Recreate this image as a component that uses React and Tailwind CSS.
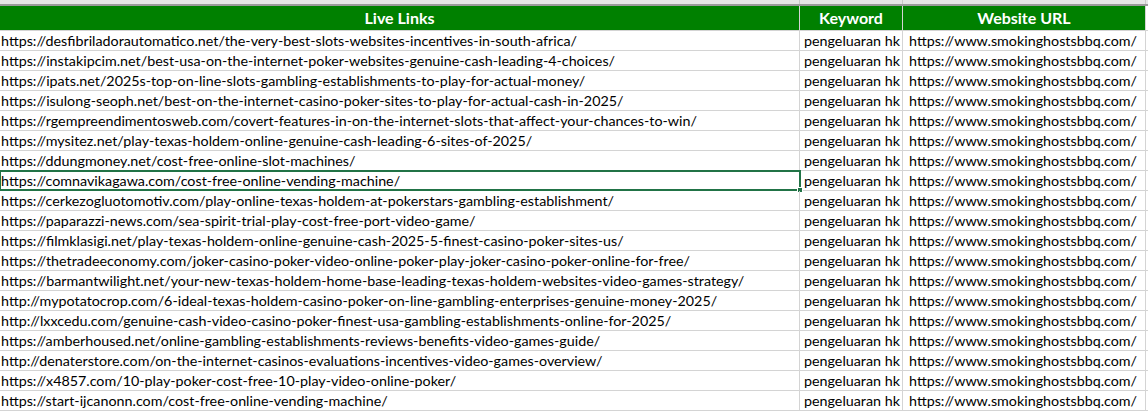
const links = [
  "https://desfibriladorautomatico.net/the-very-best-slots-websites-incentives-in-south-africa/",
  "https://instakipcim.net/best-usa-on-the-internet-poker-websites-genuine-cash-leading-4-choices/",
  "https://ipats.net/2025s-top-on-line-slots-gambling-establishments-to-play-for-actual-money/",
  "https://isulong-seoph.net/best-on-the-internet-casino-poker-sites-to-play-for-actual-cash-in-2025/",
  "https://rgempreendimentosweb.com/covert-features-in-on-the-internet-slots-that-affect-your-chances-to-win/",
  "https://mysitez.net/play-texas-holdem-online-genuine-cash-leading-6-sites-of-2025/",
  "https://ddungmoney.net/cost-free-online-slot-machines/",
  "https://comnavikagawa.com/cost-free-online-vending-machine/",
  "https://cerkezogluotomotiv.com/play-online-texas-holdem-at-pokerstars-gambling-establishment/",
  "https://paparazzi-news.com/sea-spirit-trial-play-cost-free-port-video-game/",
  "https://filmklasigi.net/play-texas-holdem-online-genuine-cash-2025-5-finest-casino-poker-sites-us/",
  "https://thetradeeconomy.com/joker-casino-poker-video-online-poker-play-joker-casino-poker-online-for-free/",
  "https://barmantwilight.net/your-new-texas-holdem-home-base-leading-texas-holdem-websites-video-games-strategy/",
  "http://mypotatocrop.com/6-ideal-texas-holdem-casino-poker-on-line-gambling-enterprises-genuine-money-2025/",
  "http://lxxcedu.com/genuine-cash-video-casino-poker-finest-usa-gambling-establishments-online-for-2025/",
  "https://amberhoused.net/online-gambling-establishments-reviews-benefits-video-games-guide/",
  "http://denaterstore.com/on-the-internet-casinos-evaluations-incentives-video-games-overview/",
  "https://x4857.com/10-play-poker-cost-free-10-play-video-online-poker/",
  "https://start-ijcanonn.com/cost-free-online-vending-machine/",
];

const cols = "grid grid-cols-[800px_103px_243px_1fr]";

export default function App() {
  return (
    <div className="w-[1148px] h-[411px] overflow-hidden bg-white text-[14.3px] text-black font-['Lato','Liberation_Sans',sans-serif]">
      <div className={`${cols} h-[4px] bg-[#e6e6e6]`}>
        <div className="border-r border-[#c8c8c8]" />
        <div className="border-r border-[#c8c8c8]" />
        <div className="border-r border-[#c8c8c8]" />
        <div />
      </div>
      <div className="h-[2px] bg-[#9b9b9b]" />
      <div className={`${cols} h-[25px] border-b border-[#d4d4d4]`}>
        <div className="bg-[#008000] text-white font-bold text-[16px] flex items-center justify-center border-r border-[#d4d4d4]">Live Links</div>
        <div className="bg-[#008000] text-white font-bold text-[16px] flex items-center justify-center border-r border-[#d4d4d4]">Keyword</div>
        <div className="bg-[#008000] text-white font-bold text-[16px] flex items-center justify-center border-r border-[#d4d4d4]">Website URL</div>
        <div />
      </div>
      {links.map((url, i) => (
        <div key={i} className={`${cols} h-[20px] border-b border-[#d4d4d4]`}>
          <div className="relative border-r border-[#d4d4d4] pl-[1px] leading-[19px] whitespace-nowrap">
            {url}
            {i === 7 && (
              <div className="absolute -left-[1px] -top-[1px] w-[802px] h-[21px] border-2 border-[#217346]">
                <div className="absolute -right-[4px] -bottom-[4px] w-[6px] h-[6px] bg-[#217346] border border-white" />
              </div>
            )}
          </div>
          <div className="border-r border-[#d4d4d4] pl-[4px] leading-[19px] whitespace-nowrap overflow-hidden">pengeluaran hk</div>
          <div className="border-r border-[#d4d4d4] pl-[6px] leading-[19px] whitespace-nowrap overflow-hidden">https://www.smokinghostsbbq.com/</div>
          <div />
        </div>
      ))}
    </div>
  );
}
